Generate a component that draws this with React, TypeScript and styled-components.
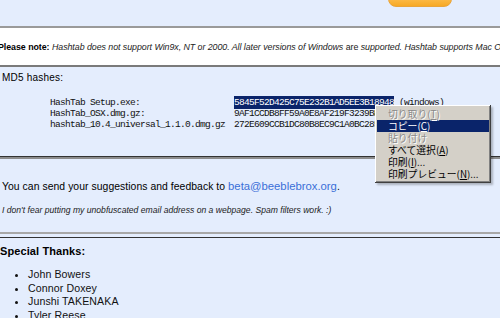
import * as React from 'react';
import styled, { createGlobalStyle } from 'styled-components';

const GlobalStyle = createGlobalStyle`
  html, body {
    margin: 0;
    padding: 0;
    background: #e4edfd;
  }
  body {
    font-family: "Liberation Sans", Arial, sans-serif;
  }
`;

const Page = styled.div`
  position: relative;
  width: 500px;
  height: 318px;
  overflow: hidden;
  background: #e4edfd;
  color: #000;
`;

const TopBar = styled.div`
  height: 26px;
  display: flex;
  padding-left: 388px;
`;

const DonateButton = styled.div`
  width: 64px;
  height: 22px;
  margin-top: -15px;
  border-radius: 8px;
  border: 1px solid #e9a43a;
  background: linear-gradient(#ffe09a, #fdbd4c 60%, #f7a925);
  display: flex;
  align-items: flex-end;
  justify-content: center;
  font-size: 12px;
  font-weight: bold;
  color: #1b2b4a;
  line-height: 12px;
  padding-bottom: 6px;
  box-sizing: border-box;
`;

const Rule = styled.div<{ $color: string; $size?: number }>`
  height: ${(p) => p.$size ?? 1}px;
  background: ${(p) => p.$color};
`;

const NoteBox = styled.div`
  background: #fff;
  height: 37px;
  display: flex;
  align-items: center;
  margin-left: -2px;
  white-space: nowrap;
  font-size: 8.85px;
  letter-spacing: -0.05px;
  color: #222;
`;

const Bold = styled.b`
  font-weight: bold;
  color: #000;
`;

const Em = styled.i`
  font-style: italic;
`;

const Section = styled.div<{ $height: number }>`
  height: ${(p) => p.$height}px;
  box-sizing: border-box;
`;

const SectionTitle = styled.div<{ $bold?: boolean }>`
  padding: ${(p) => (p.$bold ? '6px 0 0 0' : '4px 0 0 2px')};
  font-size: ${(p) => (p.$bold ? '11px' : '10px')};
  font-weight: ${(p) => (p.$bold ? 'bold' : 'normal')};
  letter-spacing: ${(p) => (p.$bold ? '0.1px' : '0.2px')};
  line-height: 14px;
`;

const HashTable = styled.div`
  display: grid;
  grid-template-columns: 184px auto;
  margin: 12px 0 0 50px;
  font-family: "Liberation Mono", "DejaVu Sans Mono", monospace;
  font-size: 9.5px;
  letter-spacing: -0.7px;
  line-height: 11px;
  white-space: nowrap;
  color: #111;
`;

const Selected = styled.span`
  background: #0a246a;
  color: #fff;
  padding: 1px 0;
`;

const Feedback = styled.div`
  padding: 21px 0 0 2px;
  font-size: 10.4px;
  letter-spacing: 0.05px;
  white-space: nowrap;
`;

const MailLink = styled.a`
  color: #3a6fd8;
  text-decoration: none;
  font-size: 11.3px;
  letter-spacing: 0;
`;

const Aside = styled.div`
  padding: 13px 0 0 2px;
  font-size: 8.6px;
  font-style: italic;
  color: #222;
  white-space: nowrap;
`;

const ThanksList = styled.ul`
  margin: 10px 0 0 0;
  padding-left: 28px;
  font-size: 10.6px;
  line-height: 13.7px;
  letter-spacing: 0.1px;
  color: #111;
`;

const ContextMenu = styled.div`
  position: absolute;
  left: 375px;
  top: 105px;
  width: 116px;
  padding: 3px 2px 3px 2px;
  background: #d4d0c8;
  box-sizing: border-box;
  box-shadow: inset -1px -1px #404040, inset 1px 1px #ffffff, inset -2px -2px #808080,
    inset 2px 2px #d4d0c8, 2px 2px 2px rgba(0, 0, 0, 0.25);
  font-family: "Noto Sans CJK JP", "Liberation Sans", sans-serif;
  font-size: 9.8px;
`;

const MenuItem = styled.div<{ $disabled?: boolean; $active?: boolean }>`
  height: 12px;
  line-height: 12px;
  padding-left: 11px;
  white-space: nowrap;
  color: ${(p) => (p.$active ? '#fff' : p.$disabled ? '#8a8a8a' : '#000')};
  background: ${(p) => (p.$active ? '#0a246a' : 'transparent')};
  text-shadow: ${(p) => (p.$disabled ? '1px 1px #fff' : 'none')};
  & u {
    text-decoration: underline;
  }
`;

const hashes = [
  { file: 'HashTab Setup.exe:', hash: '5845F52D425C75E232B1AD5EE3B18948', note: ' (windows)', selected: true },
  { file: 'HashTab_OSX.dmg.gz:', hash: '9AF1CCDB8FF59A0E8AF219F3239BB6D2', note: ' (osx)' },
  { file: 'hashtab_10.4_universal_1.1.0.dmg.gz', hash: '272E609CCB1DC80B8EC9C1A0BC285F14', note: ' (osx 10.4)' },
];

const thanks = ['John Bowers', 'Connor Doxey', 'Junshi TAKENAKA', 'Tyler Reese'];

const App: React.FC = () => {
  return (
    <Page>
      <GlobalStyle />
      <TopBar>
        <DonateButton>Donate</DonateButton>
      </TopBar>
      <Rule $color="#9a9a9a" $size={2} />
      <NoteBox>
        <span>
          <Bold>Please note:</Bold>{' '}
          <Em>Hashtab does not support Win9x, NT or 2000. All later versions of Windows</Em> are{' '}
          <Em>supported. Hashtab supports Mac OSX 10.4 and later.</Em>
        </span>
      </NoteBox>
      <Rule $color="#7a7a7a" $size={2} />
      <Section $height={89}>
        <SectionTitle>MD5 hashes:</SectionTitle>
        <HashTable>
          {hashes.map((h) => (
            <React.Fragment key={h.file}>
              <div>{h.file}</div>
              <div>
                {h.selected ? <Selected>{h.hash}</Selected> : h.hash}
                {h.note}
              </div>
            </React.Fragment>
          ))}
        </HashTable>
      </Section>
      <Rule $color="#333" />
      <Rule $color="#8c8c8c" $size={2} />
      <Section $height={73}>
        <Feedback>
          You can send your suggestions and feedback to <MailLink>beta@beeblebrox.org</MailLink>.
        </Feedback>
        <Aside>I don't fear putting my unobfuscated email address on a webpage. Spam filters work. :)</Aside>
      </Section>
      <Rule $color="#a8a8a8" $size={2} />
      <Section $height={3} />
      <Rule $color="#333" />
      <Section $height={80}>
        <SectionTitle $bold>Special Thanks:</SectionTitle>
        <ThanksList>
          {thanks.map((name) => (
            <li key={name}>{name}</li>
          ))}
        </ThanksList>
      </Section>
      <ContextMenu>
        <MenuItem $disabled>切り取り(<u>T</u>)</MenuItem>
        <MenuItem $active>コピー(<u>C</u>)</MenuItem>
        <MenuItem $disabled>貼り付け</MenuItem>
        <MenuItem>すべて選択(<u>A</u>)</MenuItem>
        <MenuItem>印刷(<u>I</u>)...</MenuItem>
        <MenuItem>印刷プレビュー(<u>N</u>)...</MenuItem>
      </ContextMenu>
    </Page>
  );
};

export default App;
